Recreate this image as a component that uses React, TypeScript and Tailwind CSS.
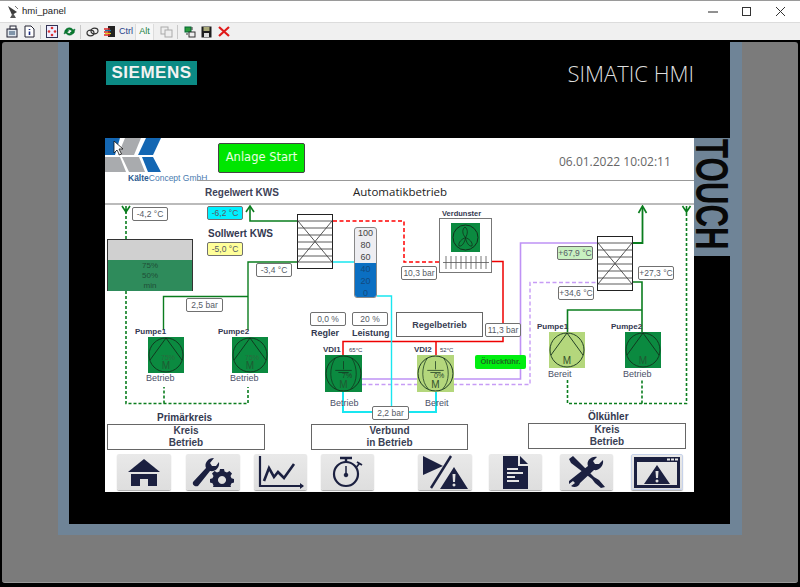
import type { ReactNode } from 'react';

const ink = '#1b2040';

const Value = ({ className, children }: { className: string; children: ReactNode }) => (
  <div className={`absolute flex h-[14px] items-center justify-center whitespace-nowrap rounded-[2px] border border-[#707070] font-['Liberation_Sans',sans-serif] text-[8.5px] text-[#555b66] ${className}`}>
    {children}
  </div>
);

const Label = ({ className, children }: { className: string; children: ReactNode }) => (
  <div className={`absolute whitespace-nowrap font-['Liberation_Sans',sans-serif] font-bold leading-none text-[#333850] ${className}`}>
    {children}
  </div>
);

const StatusBox = ({ className, title, lines }: { className: string; title?: string; lines: string[] }) => (
  <div className={`absolute flex flex-col items-center justify-center border border-[#666] bg-white font-['Liberation_Sans',sans-serif] font-bold leading-[12px] text-[#3a3f55] ${className}`}>
    {title}
    {lines.map((line) => (
      <span key={line}>{line}</span>
    ))}
  </div>
);

const Exchanger = ({ className }: { className: string }) => (
  <svg className={`absolute ${className}`} viewBox="0 0 36 55">
    <rect x="0.5" y="0.5" width="35" height="54" fill="#fff" stroke="#222" />
    {[7, 14, 21, 28, 35, 42, 48].map((y) => (
      <line key={y} x1="0" x2="36" y1={y} y2={y} stroke="#333" strokeWidth="0.8" />
    ))}
    <path d="M1 7L35 48M35 7L1 48" stroke="#444" strokeWidth="0.9" fill="none" />
  </svg>
);

type PumpProps = {
  className: string;
  name: string;
  nameClass: string;
  status: string;
  statusClass: string;
  active?: boolean;
  compressor?: boolean;
  percent?: string;
  temp?: string;
  tempClass?: string;
};

const Pump = ({ className, name, nameClass, status, statusClass, active, compressor, percent, temp, tempClass }: PumpProps) => (
  <div className={`absolute ${className}`}>
    <Label className={`text-[8px] ${nameClass}`}>{name}</Label>
    {temp && (
      <div className={`absolute font-['Liberation_Sans',sans-serif] text-[6px] leading-none text-[#333850] ${tempClass}`}>{temp}</div>
    )}
    <svg className={`h-full w-full ${active ? 'bg-[#0b8a40]' : 'bg-[#b4d77c]'}`} viewBox="0 0 36 36">
      <circle cx="18" cy="18" r="17" fill="none" stroke="#12301c" strokeWidth="0.9" />
      {compressor ? (
        <path d="M10 3C4 12 4 26 11 33M26 3C32 12 32 26 25 33M18 6V14M10 15H26M13 17H23" fill="none" stroke="#12301c" strokeWidth="0.7" />
      ) : (
        <path d="M2 23L18 1L34 23" fill="none" stroke="#12301c" strokeWidth="0.9" />
      )}
    </svg>
    {percent && (
      <div className={`absolute left-[13px] font-['Liberation_Sans',sans-serif] text-[7px] leading-none ${compressor ? 'top-[17px] left-[17px] text-[#24402c]' : 'top-[17px] text-[#2a6a3f]'}`}>
        {percent}
      </div>
    )}
    <div className={`absolute left-0 right-0 text-center font-['Liberation_Sans',sans-serif] text-[10px] leading-none ${compressor ? 'top-[25px]' : 'top-[24px]'} ${active ? 'text-[#1f5a33]' : 'text-[#33502a]'}`}>
      M
    </div>
    <div className={`absolute whitespace-nowrap font-['Liberation_Sans',sans-serif] text-[9px] leading-none text-[#4a5068] ${statusClass}`}>{status}</div>
  </div>
);

const NavButton = ({ className, children }: { className: string; children: ReactNode }) => (
  <div className={`flex h-[36px] items-center justify-center rounded-[2px] bg-gradient-to-b from-[#e9e9e9] to-[#dedede] shadow-[0_1px_1px_#aaa] ${className}`}>
    {children}
  </div>
);

const Sep = ({ className }: { className: string }) => <div className={`h-[14px] w-px bg-[#c8c8c8] ${className}`} />;

const Pipes = () => (
  <svg className="absolute left-0 top-0 h-[249px] w-[589px]" viewBox="105 205 589 249" fill="none">
    {/* primary loop dashed */}
    <g stroke="#0a7d1e" strokeWidth="1.6" strokeDasharray="3 2">
      <path d="M126 211V403.5H248V387M164 403.5V387" />
      <path d="M567.5 380V403.5H686.5V211M642 403.5V380" />
    </g>
    <g stroke="#0a7d1e" strokeWidth="1.6">
      <path d="M122 206L126 212L130 206M126 206V213" />
      <path d="M682.5 206L686.5 212L690.5 206M686.5 206V213" />
    </g>
    {/* solid green */}
    <g stroke="#0a7d1e" strokeWidth="1.4">
      <path d="M297 221H250V207" strokeWidth="1.6" />
      <path d="M246 212L250 206L254 212" strokeWidth="1.6" />
      <path d="M297 262H248V330M248 296.5H163.5V330" />
      <path d="M633 243H642.5V207" strokeWidth="1.8" />
      <path d="M638.5 213L642.5 206L646.5 213" strokeWidth="1.6" />
      <path d="M633 282H642V333M642 310H567.5V333" strokeWidth="1.6" />
    </g>
    {/* refrigerant */}
    <path d="M333 221H404V262H439" stroke="#ff0000" strokeWidth="1.5" strokeDasharray="4 2.5" />
    <path d="M492 261.5H503V341.5H343V355M436 341.5V355" stroke="#ee0000" strokeWidth="1.5" />
    {/* oil */}
    <path d="M362 379H520.5V243H597" stroke="#bf92f5" strokeWidth="1.6" />
    <path d="M362 384.5H530V282.5H597" stroke="#c79cf5" strokeWidth="1.4" strokeDasharray="4 2.5" />
    {/* water */}
    <path d="M333 262H355M377 296H391.5V406" stroke="#19e6f0" strokeWidth="1.4" />
    <path d="M343 392V412H436V392" stroke="#19e6f0" strokeWidth="2" />
  </svg>
);

const Logo = () => (
  <svg className="h-[35px] w-[57px]" viewBox="0 0 57 35">
    <path d="M0 0H15L10 17H0Z" fill="#1467b3" />
    <path d="M20 0H36L29 17H13Z" fill="#a9abae" />
    <path d="M41 0H56L48 17H33Z" fill="#1467b3" />
    <path d="M0 19H15L21 34H0Z" fill="#a9abae" />
    <path d="M17 19H34L40 34H24Z" fill="#a9abae" />
    <path d="M37 19H48L56 34H43Z" fill="#1467b3" />
    <path d="M9 3V15L12 12L14.5 17L16.5 16L14 11H18Z" fill="#fff" stroke="#111" strokeWidth="0.8" />
  </svg>
);

export default function App() {
  return (
    <div className="flex h-[587px] w-[800px] flex-col overflow-hidden bg-black font-['Liberation_Sans',sans-serif]">
      {/* window title */}
      <div className="flex h-[23px] items-center border-t border-b border-t-[#9a9a9a] border-b-[#dcdcdc] bg-white pl-[7px]">
        <svg className="h-[14px] w-[12px]" viewBox="0 0 12 14">
          <path d="M1 1L10 7L5 10Z" fill="#3c3c3c" />
          <path d="M6 8L3 13H9Z" fill="#555" />
          <path d="M8 1L11 4" stroke="#777" />
        </svg>
        <span className="ml-[3px] w-[46px] text-[9.5px] text-[#222]">hmi_panel</span>
        <svg className="ml-[640px] h-[10px] w-[10px]" viewBox="0 0 10 10">
          <path d="M0 5H10" stroke="#222" />
        </svg>
        <svg className="ml-[24px] h-[9px] w-[9px]" viewBox="0 0 9 9">
          <rect x="0.5" y="0.5" width="8" height="8" fill="none" stroke="#333" />
        </svg>
        <svg className="ml-[24px] h-[11px] w-[11px]" viewBox="0 0 11 11">
          <path d="M1 1L10 10M10 1L1 10" stroke="#333" />
        </svg>
      </div>

      {/* toolbar */}
      <div className="flex h-[17px] items-center bg-[#f0f0f0] pl-[6px]">
        <svg className="h-[13px] w-[12px]" viewBox="0 0 12 13">
          <rect x="1" y="4" width="10" height="8" fill="#dfe6ee" stroke="#223" />
          <rect x="4" y="1" width="6" height="3" fill="#fff" stroke="#223" />
          <path d="M3 7H9M3 9H9" stroke="#246" />
        </svg>
        <svg className="ml-[6px] h-[13px] w-[11px]" viewBox="0 0 11 13">
          <path d="M1 1H7L10 4V12H1Z" fill="#fff" stroke="#223" />
          <path d="M5.5 4V5M5.5 6.5V10" stroke="#1a2a80" strokeWidth="1.6" />
        </svg>
        <Sep className="ml-[5px]" />
        <svg className="ml-[5px] h-[13px] w-[12px]" viewBox="0 0 12 13">
          <rect x="0.5" y="0.5" width="11" height="12" fill="#eef" stroke="#335" />
          <circle cx="6" cy="3" r="1.3" fill="#d33" />
          <circle cx="3" cy="6.5" r="1.3" fill="#d33" />
          <circle cx="9" cy="6.5" r="1.3" fill="#d33" />
          <circle cx="6" cy="10" r="1.3" fill="#d33" />
        </svg>
        <svg className="ml-[5px] h-[13px] w-[13px]" viewBox="0 0 13 13">
          <path d="M2 6C3 2 9 2 10 5L12 4L11 8H7L9 6C7 4 5 4 4 6Z" fill="#0a7a2a" stroke="#063" strokeWidth="0.5" />
          <path d="M11 7C10 11 4 11 3 8L1 9L2 5.500H6L4 7.500C6 9 8 9 9 7" fill="#0a7a2a" stroke="#063" strokeWidth="0.5" />
        </svg>
        <Sep className="ml-[4px]" />
        <svg className="ml-[5px] h-[10px] w-[13px]" viewBox="0 0 13 10">
          <ellipse cx="4.500" cy="6" rx="3.500" ry="2.800" fill="none" stroke="#333" strokeWidth="1.200" />
          <ellipse cx="8.500" cy="4" rx="3.500" ry="2.800" fill="none" stroke="#333" strokeWidth="1.200" />
        </svg>
        <svg className="ml-[4px] h-[13px] w-[13px]" viewBox="0 0 13 13">
          <rect x="5" y="1" width="7" height="11" fill="#222" />
          <path d="M1 4H7M1 7H7M1 10H7" strokeWidth="1.500" stroke="#d22" />
          <path d="M2 5.500H8" strokeWidth="1.200" stroke="#17a" />
          <path d="M2 8.500H8" strokeWidth="1.200" stroke="#dc2" />
        </svg>
        <span className="ml-[3px] w-[14px] text-[9px] text-[#27408b]">Ctrl</span>
        <div className="ml-[2px] flex h-[16px] w-[19px] items-center justify-center border-x border-[#dcdcdc] bg-[#f7f7f7] text-[9px] text-[#208040]">
          Alt
        </div>
        <svg className="ml-[6px] h-[12px] w-[13px]" viewBox="0 0 13 12">
          <rect x="1" y="1" width="7" height="7" fill="#eee" stroke="#aaa" />
          <rect x="5" y="4" width="7" height="7" fill="#eee" stroke="#aaa" />
        </svg>
        <Sep className="ml-[4px]" />
        <svg className="ml-[6px] h-[12px] w-[12px]" viewBox="0 0 12 12">
          <rect x="1" y="1" width="6" height="5" fill="#2a9a3a" stroke="#063" />
          <rect x="5" y="6" width="6" height="5" fill="#eee" stroke="#333" />
          <path d="M8 1V4M2 8H4" stroke="#333" />
        </svg>
        <svg className="ml-[5px] h-[12px] w-[11px]" viewBox="0 0 11 12">
          <rect x="0.500" y="0.500" width="10" height="11" fill="#1d1d1d" />
          <rect x="2.500" y="1" width="6" height="4" fill="#a8a878" />
          <rect x="3" y="7" width="5" height="4" fill="#ddd" />
        </svg>
        <svg className="ml-[6px] h-[11px] w-[12px]" viewBox="0 0 12 11">
          <path d="M1 1L11 10M11 1L1 10" stroke="#e01b1b" strokeWidth="2.200" />
        </svg>
      </div>

      {/* panel */}
      <div className="mx-[2px] mt-[2px] h-[541px] rounded-[3px] border-b border-[#999] bg-[#7b7b7b] pl-[56px]">
        <div className="h-[493px] w-[684px] bg-[#6f8497] px-[11px] pb-[11px]">
          <div className="flex h-[482px] w-[661px] flex-col bg-black">
            <div className="flex h-[96px] items-start justify-between pl-[37px] pr-[36px]">
              <div className="mt-[19px] flex h-[24px] w-[91px] items-center justify-center bg-[#0b8a84] font-['Liberation_Sans',sans-serif] text-[17px] font-bold tracking-[0.5px] text-[#f2f2f2]">
                SIEMENS
              </div>
              <div className="mt-[18px] font-['Open_Sans',sans-serif] text-[22px] font-light leading-[26px] text-[#dedede]">SIMATIC HMI</div>
            </div>
            <div className="flex items-start pl-[36px]">
              {/* screen */}
              <div className="flex h-[354px] w-[589px] flex-col bg-white">
                <div className="flex h-[42px] items-start">
                  <div className="flex w-[113px] flex-col items-start">
                    <Logo />
                    <div className="ml-[23px] mt-[1px] whitespace-nowrap font-['Liberation_Sans',sans-serif] text-[8.500px] leading-[9px] text-[#4a7cb0]">
                      <b className="text-[#2a5a90]">Kälte</b>Concept GmbH
                    </div>
                  </div>
                  <div className="mt-[5px] flex h-[30px] w-[87px] items-center justify-center rounded-[2px] border border-[#444] bg-[#00e600] font-['DejaVu_Sans',sans-serif] text-[11.500px] text-[#e9ffe0]">
                    Anlage Start
                  </div>
                  <div className="ml-[254px] mt-[17px] whitespace-nowrap font-['Open_Sans',sans-serif] text-[12px] leading-[14px] text-[#666]">06.01.2022 10:02:11</div>
                </div>
                <div className="ml-[92px] h-px bg-[#999]" />
                <div className="flex h-[24px] items-center border-b-2 border-[#bbb] pl-[100px]">
                  <span className="w-[74px] whitespace-nowrap font-['Liberation_Sans',sans-serif] text-[10px] font-bold text-[#3d4258]">Regelwert KWS</span>
                  <span className="ml-[74px] font-['Open_Sans',sans-serif] text-[11.500px] text-[#222]">Automatikbetrieb</span>
                </div>

                {/* process canvas */}
                <div className="relative h-[249px] w-[589px] overflow-hidden">
                  <Pipes />

                  <Value className="left-[27px] top-[2px] w-[36px] bg-white">-4,2 °C</Value>
                  <Value className="left-[102px] top-[1px] w-[36px] bg-[#00f0ff]">-6,2 °C</Value>
                  <Label className="left-[103px] top-[24px] text-[10px]">Sollwert KWS</Label>
                  <Value className="left-[102px] top-[37px] w-[36px] bg-[#ffff99]">-5,0 °C</Value>
                  <Value className="left-[151px] top-[58px] w-[36px] bg-white">-3,4 °C</Value>
                  <Value className="left-[81px] top-[93px] w-[37px] bg-white">2,5 bar</Value>

                  {/* tank */}
                  <div className="absolute left-[2px] top-[34px] flex h-[52px] w-[86px] flex-col border border-[#333] bg-[#d0d0d0]">
                    <div className="mt-[20px] flex flex-1 flex-col items-center bg-[#2e8b5b] text-[8px] leading-[10px] text-[#1f4f37]">
                      <span className="mt-[1px]">75%</span>
                      <span>50%</span>
                      <span>min</span>
                    </div>
                  </div>

                  <Exchanger className="left-[192px] top-[9px] h-[55px] w-[36px]" />
                  <Exchanger className="left-[492px] top-[31px] h-[55px] w-[36px]" />

                  {/* level gauge */}
                  <div className="absolute left-[249px] top-[22px] flex h-[71px] w-[23px] flex-col items-center overflow-hidden rounded-[3px] border border-[#888] bg-[#eeeef2] font-['Liberation_Sans',sans-serif] text-[9px] leading-[12px] text-[#444]">
                    <span className="mt-[-1px]">100</span>
                    <span>80</span>
                    <span>60</span>
                    <div className="flex w-full flex-1 flex-col items-center bg-[#0b6fc2] text-[#124a80]">
                      <span>40</span>
                      <span>20</span>
                      <span>0</span>
                    </div>
                  </div>

                  {/* evaporative cooler */}
                  <Label className="left-[337px] top-[5px] text-[7.500px]">Verdunster</Label>
                  <div className="absolute left-[334px] top-[13px] flex h-[55px] w-[53px] flex-col items-center border border-[#777] bg-white">
                    <svg className="mt-[4px] h-[29px] w-[29px] bg-[#0b8a40]" viewBox="0 0 29 29">
                      <circle cx="14.500" cy="14.500" r="12.500" fill="none" stroke="#12301c" />
                      <path d="M14.500 14.500C11 11 11 6 14 4C17 6 17 11 14.500 14.500ZM14.500 14.500C11 16 7 19 8 23C11 24 14 19 14.500 14.500ZM14.500 14.500C15 19 18 24 21 23C22 19 18 16 14.500 14.500Z" fill="none" stroke="#12301c" strokeWidth="0.800" />
                    </svg>
                    <svg className="mt-[4px] h-[13px] w-[46px]" viewBox="0 0 46 13">
                      <path d="M0 6.500H46M3 0V13M8 0V13M13 0V13M18 0V13M23 0V13M28 0V13M33 0V13M38 0V13M43 0V13" stroke="#555" strokeWidth="0.800" />
                    </svg>
                  </div>

                  <Value className="left-[296px] top-[61px] w-[36px] bg-white">10,3 bar</Value>
                  <Value className="left-[205px] top-[107px] w-[36px] bg-white">0,0 %</Value>
                  <Value className="left-[247px] top-[107px] w-[36px] bg-white">20 %</Value>
                  <Label className="left-[206px] top-[124px] text-[9px]">Regler</Label>
                  <Label className="left-[247px] top-[124px] text-[9px]">Leistung</Label>
                  <StatusBox className="left-[291px] top-[107px] h-[25px] w-[87px] text-[9px]" lines={['Regelbetrieb']} />
                  <Value className="left-[380px] top-[118px] w-[36px] bg-white">11,3 bar</Value>
                  <div className="absolute left-[370px] top-[150px] flex h-[14px] w-[51px] items-center justify-center rounded-[2px] bg-[#00ee10] font-['Liberation_Sans',sans-serif] text-[7.500px] font-bold text-[#1c6a20]">
                    Ölrückführ.
                  </div>
                  <Value className="left-[267px] top-[201px] w-[37px] bg-white">2,2 bar</Value>
                  <Value className="left-[452px] top-[41px] w-[36px] bg-[#c8f0c0]">+67,9 °C</Value>
                  <Value className="left-[453px] top-[81px] w-[36px] bg-white">+34,6 °C</Value>
                  <Value className="left-[533px] top-[61px] w-[36px] bg-white">+27,3 °C</Value>

                  <Pump className="left-[43px] top-[132px] h-[36px] w-[36px]" name="Pumpe1" nameClass="left-[-13px] top-[-9px]" status="Betrieb" statusClass="left-[-2px] top-[37px]" active percent="75%" />
                  <Pump className="left-[127px] top-[132px] h-[36px] w-[36px]" name="Pumpe2" nameClass="left-[-14px] top-[-9px]" status="Betrieb" statusClass="left-[-2px] top-[37px]" active percent="75%" />
                  <Pump className="left-[220px] top-[150px] h-[37px] w-[37px]" name="VDI1" nameClass="left-[-2px] top-[-9px]" status="Betrieb" statusClass="left-[5px] top-[44px]" active compressor percent="7%" temp="65°C" tempClass="left-[24px] top-[-8px]" />
                  <Pump className="left-[312px] top-[150px] h-[37px] w-[37px]" name="VDI2" nameClass="left-[-3px] top-[-9px]" status="Bereit" statusClass="left-[8px] top-[44px]" compressor percent="0%" temp="52°C" tempClass="left-[23px] top-[-8px]" />
                  <Pump className="left-[444px] top-[127px] h-[36px] w-[36px]" name="Pumpe1" nameClass="left-[-12px] top-[-9px]" status="Bereit" statusClass="left-[-1px] top-[38px]" />
                  <Pump className="left-[520px] top-[127px] h-[36px] w-[36px]" name="Pumpe2" nameClass="left-[-14px] top-[-9px]" status="Betrieb" statusClass="left-[-2px] top-[38px]" active />

                  <Label className="left-[52px] top-[208px] text-[10px]">Primärkreis</Label>
                  <StatusBox className="left-[2px] top-[219px] h-[26px] w-[158px] text-[10px]" lines={['Kreis', 'Betrieb']} />
                  <StatusBox className="left-[206px] top-[219px] h-[26px] w-[157px] text-[10px]" lines={['Verbund', 'in Betrieb']} />
                  <Label className="left-[483px] top-[207px] text-[10px]">Ölkühler</Label>
                  <StatusBox className="left-[423px] top-[218px] h-[26px] w-[158px] text-[10px]" lines={['Kreis', 'Betrieb']} />
                </div>

                {/* navigation */}
                <div className="flex h-[38px] items-start">
                  <NavButton className="ml-[12px] w-[54px]">
                    <svg className="h-[27px] w-[32px]" viewBox="0 0 32 27" fill={ink}>
                      <path d="M16 0L32 13H0Z" />
                      <path d="M3 15H29V27H20V20H12V27H3Z" />
                    </svg>
                  </NavButton>
                  <NavButton className="ml-[15px] w-[54px]">
                    <svg className="h-[30px] w-[44px]" viewBox="0 0 44 30" fill={ink}>
                      <path d="M2 25L15 11C13 6 17 1 23 1L19 6L21 9L25 9L28 5C29 11 24 15 19 14L7 29C4 30 1 28 2 25Z" />
                      <path fillRule="evenodd" d="M29 12H33L33.600 14.500L36 15.500L38.500 14L41 16.500L39.500 19L40.500 21.200L43 22V25.500L40.500 26.200L39.500 28.500L40 30H22L22.500 28.500L21.500 26.200L19 25.500V22L21.500 21.200L22.500 19L21 16.500L23.500 14L26 15.500L28.400 14.500ZM31 19A4 4 0 1 0 31.001 19Z" />
                    </svg>
                  </NavButton>
                  <NavButton className="ml-[14px] w-[53px] overflow-visible">
                    <svg className="h-[34px] w-[48px]" viewBox="0 0 48 34" fill="none" stroke={ink} strokeWidth="2.200">
                      <path d="M3 1V31H46" />
                      <path d="M43 28L47 31L43 34" fill={ink} stroke="none" />
                      <path d="M7 26L12 13L17 22L21 17L27 23L37 9" strokeWidth="2.600" />
                    </svg>
                  </NavButton>
                  <NavButton className="ml-[14px] w-[53px]">
                    <svg className="h-[32px] w-[32px]" viewBox="0 0 32 32" fill="none" stroke={ink}>
                      <circle cx="14" cy="18" r="12" strokeWidth="2.200" />
                      <path d="M8 2H20M14 2V6" strokeWidth="2.400" />
                      <path d="M25 6L30 9M27 8L24.500 11" strokeWidth="1.800" />
                      <path d="M14 10V19" strokeWidth="1.500" />
                      <circle cx="14" cy="19" r="1.800" fill={ink} />
                    </svg>
                  </NavButton>
                  <NavButton className="ml-[44px] w-[54px]">
                    <svg className="h-[34px] w-[46px]" viewBox="0 0 46 34" fill={ink}>
                      <path d="M1 1L21 11L1 20Z" />
                      <path d="M9 33L29 1" stroke={ink} strokeWidth="2.400" />
                      <path fillRule="evenodd" d="M32 12L46 34H18ZM30.500 19H33.500L33 27H31ZM32 28.500A1.500 1.500 0 1 0 32.001 28.500Z" />
                    </svg>
                  </NavButton>
                  <NavButton className="ml-[17px] w-[53px]">
                    <svg className="h-[33px] w-[25px]" viewBox="0 0 25 33" fill={ink}>
                      <path d="M0 0H15V10H25V33H0Z" />
                      <path d="M17 0L25 8H17Z" />
                      <path d="M4 13H15M4 17H20M4 21H12M4 25H16" stroke="#e4e4e4" strokeWidth="2" />
                    </svg>
                  </NavButton>
                  <NavButton className="ml-[18px] w-[53px]">
                    <svg className="h-[32px] w-[38px]" viewBox="0 0 38 32" fill={ink}>
                      <path d="M1 3L5 0L26 21L31 24L37 31L33 32L27 27L24 23L3 7Z" />
                      <path d="M1 25L20 10C18 5 23 0 29 1L25 5L27 8L31 8L35 4C36 10 31 15 26 14L12 27C11 31 6 32 3 30L7 27L5 25L1 28Z" />
                    </svg>
                  </NavButton>
                  <NavButton className="ml-[18px] w-[52px] border border-[#c6d2ea]">
                    <svg className="h-[31px] w-[46px]" viewBox="0 0 46 31" fill={ink}>
                      <path fillRule="evenodd" d="M0 0H46V31H0ZM3 5V28H43V5Z" />
                      <path d="M33 1.500H36V3.500H33ZM37 1.500H40V3.500H37ZM41 1.500H44V3.500H41Z" fill="#e4e4e4" />
                      <path fillRule="evenodd" d="M23 8L36 27H10ZM21.500 14H24.500L24 21H22ZM23 22.500A1.500 1.500 0 1 0 23.001 22.500Z" />
                    </svg>
                  </NavButton>
                </div>
              </div>

              <div className="flex h-[118px] w-[36px] items-start bg-[#6f8497]">
                <span className="ml-[35px] mt-[1px] origin-top-left rotate-90 scale-x-[0.68] whitespace-nowrap font-['Liberation_Sans',sans-serif] text-[46px] font-bold leading-[35px] text-[#080808]">
                  TOUCH
                </span>
              </div>
            </div>
          </div>
        </div>
      </div>
    </div>
  );
}
